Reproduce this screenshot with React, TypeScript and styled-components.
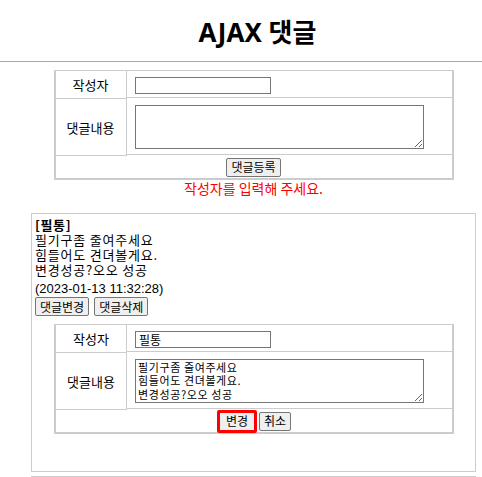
import styled, { createGlobalStyle } from "styled-components";

const GlobalStyle = createGlobalStyle`
  body {
    margin: 0;
    overflow: hidden;
    background: #fff;
    font-family: "Liberation Sans", "Noto Sans CJK KR", sans-serif;
    font-size: 13px;
    color: #000;
  }
`;

interface FormProps {
  writer?: string;
  content?: string;
  mode: "write" | "edit";
}

const CommentForm = ({ writer, content, mode }: FormProps) => {
  return (
    <FormTable>
      <LabelCell>작성자</LabelCell>
      <ValueCell>
        <TextInput defaultValue={writer} />
      </ValueCell>
      <LabelCell $tall>댓글내용</LabelCell>
      <ValueCell $tall>
        <TextArea defaultValue={content} />
      </ValueCell>
      <ButtonRow>
        {mode === "write" ? (
          <Button>댓글등록</Button>
        ) : (
          <>
            <Button $focused>변경</Button>
            <Button>취소</Button>
          </>
        )}
      </ButtonRow>
    </FormTable>
  );
};

const App = () => {
  return (
    <Page>
      <GlobalStyle />
      <Header>
        <Title>AJAX 댓글</Title>
      </Header>
      <Main>
        <CommentForm mode="write" />
        <ErrorText>작성자를 입력해 주세요.</ErrorText>
        <CommentList>
          <CommentBox>
            <Writer>[필통]</Writer>
            <Body>
              필기구좀 줄여주세요
              <br />
              힘들어도 견뎌볼게요.
              <br />
              변경성공?오오 성공
            </Body>
            <DateText>(2023-01-13 11:32:28)</DateText>
            <Actions>
              <Button>댓글변경</Button>
              <Button>댓글삭제</Button>
            </Actions>
            <CommentForm
              mode="edit"
              writer="필통"
              content={"필기구좀 줄여주세요\n힘들어도 견뎌볼게요.\n변경성공?오오 성공"}
            />
          </CommentBox>
          <CommentBox />
        </CommentList>
      </Main>
    </Page>
  );
};

export default App;

const Page = styled.div`
  width: 507px;
`;

const Header = styled.header`
  height: 61px;
  border-bottom: 1px solid #a9a9a9;
  display: flex;
  align-items: center;
  justify-content: center;
`;

const Title = styled.h1`
  margin: 0;
  padding-left: 8px;
  font-family: "Noto Sans", "Noto Sans CJK KR", sans-serif;
  font-size: 26px;
  font-weight: 700;
`;

const Main = styled.main`
  padding-top: 8px;
  display: flex;
  flex-direction: column;
  align-items: center;
`;

const FormTable = styled.div`
  width: 396px;
  display: grid;
  grid-template-columns: 71px 1fr;
  border: 2px solid #ccc;
  border-top-width: 1px;
`;

const LabelCell = styled.div<{ $tall?: boolean }>`
  height: ${(p) => (p.$tall ? 56 : 27)}px;
  border-right: 1px solid #ccc;
  border-bottom: 1px solid #ccc;
  display: flex;
  align-items: center;
  justify-content: center;
  font-family: "Noto Sans CJK KR", sans-serif;
  font-size: 13px;
`;

const ValueCell = styled.div<{ $tall?: boolean }>`
  height: ${(p) => (p.$tall ? 56 : 27)}px;
  border-bottom: 1px solid #ccc;
  display: flex;
  align-items: center;
  padding-left: 8px;
  padding-top: ${(p) => (p.$tall ? 0 : 2)}px;
  box-sizing: border-box;
`;

const TextInput = styled.input`
  width: 136px;
  height: 17px;
  box-sizing: border-box;
  border: 1px solid #767676;
  padding: 0 3px;
  font-family: "Noto Sans CJK KR", sans-serif;
  font-size: 12px;
`;

const TextArea = styled.textarea`
  width: 289px;
  height: 44px;
  box-sizing: border-box;
  border: 1px solid #767676;
  padding: 1px 2px;
  font-family: "Noto Sans CJK KR", monospace;
  font-size: 11px;
  letter-spacing: 0.6px;
  line-height: 13.5px;
  overflow: hidden;
`;

const ButtonRow = styled.div`
  grid-column: 1 / span 2;
  height: 22px;
  display: flex;
  align-items: center;
  justify-content: center;
  gap: 2px;
`;

const Button = styled.button<{ $focused?: boolean }>`
  height: ${(p) => (p.$focused ? 23 : 19)}px;
  padding: 0 ${(p) => (p.$focused ? 6 : 4)}px;
  box-sizing: border-box;
  background: #efefef;
  border: ${(p) => (p.$focused ? "3px solid #f00" : "1px solid #767676")};
  border-radius: 2px;
  font-family: "Noto Sans CJK KR", sans-serif;
  font-size: 12px;
  color: #000;
  line-height: 1;
`;

const ErrorText = styled.div`
  color: #f00;
  font-family: "Noto Sans CJK KR", sans-serif;
  font-size: 14px;
  line-height: 16px;
`;

const CommentList = styled.div`
  margin-top: 17px;
  display: flex;
  flex-direction: column;
  gap: 4px;
`;

const CommentBox = styled.div`
  width: 445px;
  height: 259px;
  box-sizing: border-box;
  border: 1px solid #ccc;
  padding: 3px 2px 0 3px;
  display: flex;
  flex-direction: column;
  align-items: flex-start;

  & > ${FormTable} {
    align-self: center;
    margin-top: 8px;
  }
`;

const Writer = styled.div`
  font-weight: 700;
  font-family: "Noto Sans CJK KR", sans-serif;
  font-size: 13px;
  letter-spacing: 0.6px;
  line-height: 15px;
`;

const Body = styled.div`
  font-family: "Noto Sans CJK KR", sans-serif;
  font-size: 13px;
  letter-spacing: 0.8px;
  line-height: 15px;
`;

const DateText = styled.div`
  margin-top: 4px;
  font-size: 13px;
  line-height: 16px;
`;

const Actions = styled.div`
  display: flex;
  gap: 5px;
`;
